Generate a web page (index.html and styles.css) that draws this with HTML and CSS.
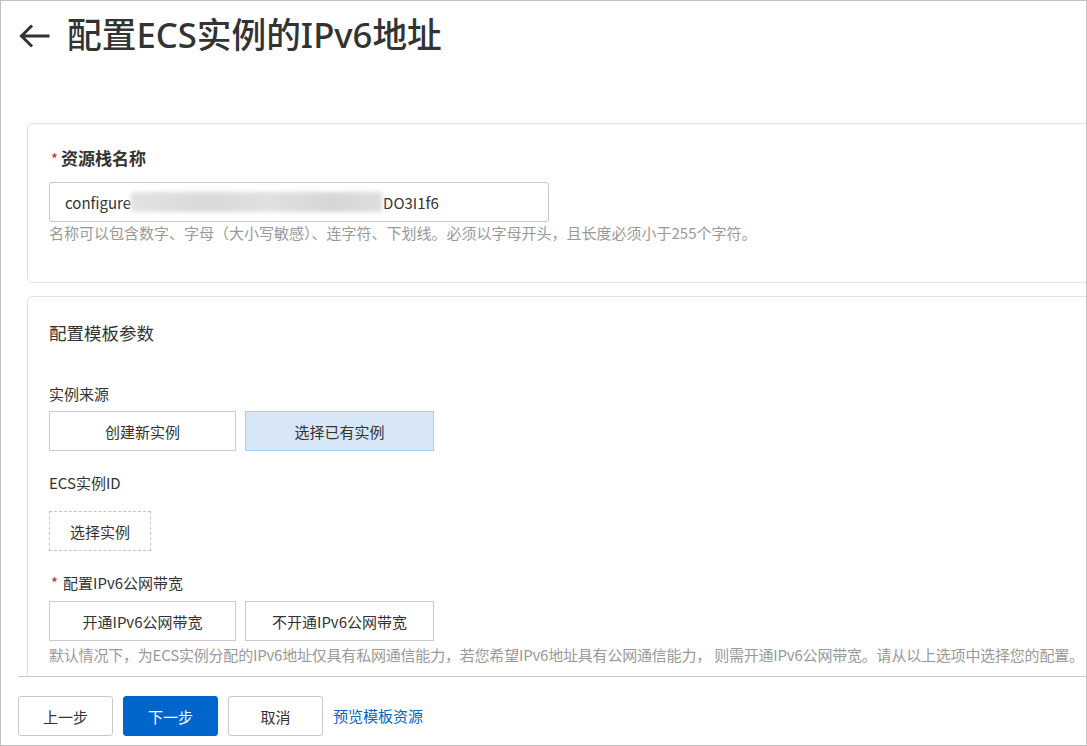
FILE: index.html
```html
<!DOCTYPE html>
<html lang="zh-CN">
<head>
<meta charset="utf-8">
<title>配置ECS实例的IPv6地址</title>
<link rel="stylesheet" href="styles.css">
</head>
<body>
<div class="frame">
  <header class="page-header">
    <svg class="back" width="32" height="24" viewBox="0 0 32 24" aria-hidden="true">
      <path d="M30 12H4M13 2.5L3.5 12L13 21.5" fill="none" stroke="#333" stroke-width="3" stroke-linecap="square" stroke-linejoin="miter"/>
    </svg>
    <h1 class="title">配置ECS实例的IPv6地址</h1>
  </header>
  <main class="body">
    <section class="card card-name">
      <div class="label label-strong"><span class="req">*</span>资源栈名称</div>
      <div class="input"><span>configure</span><span class="blurred" aria-hidden="true"></span><span>DO3I1f6</span></div>
      <div class="help">名称可以包含数字、字母（大小写敏感）、连字符、下划线。必须以字母开头，且长度必须小于255个字符。</div>
    </section>
    <section class="card card-params">
      <h2 class="section-title">配置模板参数</h2>
      <div class="label label-source">实例来源</div>
      <div class="choices">
        <div class="choice">创建新实例</div>
        <div class="choice selected">选择已有实例</div>
      </div>
      <div class="label label-ecs">ECS实例ID</div>
      <div class="dashed-btn">选择实例</div>
      <div class="label label-bw"><span class="req">*</span>配置IPv6公网带宽</div>
      <div class="choices choices-bw">
        <div class="choice">开通IPv6公网带宽</div>
        <div class="choice">不开通IPv6公网带宽</div>
      </div>
      <div class="help help-bw"><span>默认情况下，为ECS实例分配的IPv6地址仅具有私网通信能力，若您希望IPv6地址具有公网通信能力， 则需开通IPv6公网带宽。请从以上选项中选择您的配置。</span></div>
    </section>
  </main>
  <footer class="footer">
    <div class="btn">上一步</div>
    <div class="btn btn-primary">下一步</div>
    <div class="btn">取消</div>
    <a class="link" href="#">预览模板资源</a>
  </footer>
</div>
</body>
</html>
```
FILE: styles.css
```css
* { box-sizing: border-box; }
html, body { margin: 0; padding: 0; background: #fff; }
body {
  font-family: "Noto Sans CJK SC", "Noto Sans", sans-serif;
  color: #333;
  font-size: 15px;
}
.frame {
  width: 1087px;
  height: 746px;
  border: 1px solid #c2c2c2;
  display: flex;
  flex-direction: column;
  overflow: hidden;
}
.page-header {
  display: flex;
  align-items: center;
  height: 40px;
  margin-top: 14px;
  padding-left: 17px;
  flex: none;
}
.back { display: block; margin-top: 2px; }
.title {
  margin: 0 0 0 17px;
  font-family: "Noto Sans", "Noto Sans CJK SC", sans-serif;
  font-size: 34.7px;
  font-weight: 500;
  line-height: 40px;
  color: #333;
  letter-spacing: 0;
}
.body {
  flex: 1;
  overflow: hidden;
  padding: 68px 0 0 26px;
  min-height: 0;
}
.card {
  border: 1px solid #e3e3e3;
  border-radius: 5px;
  margin-right: -20px;
  padding-left: 21px;
  background: #fff;
}
.card-name {
  padding-top: 22px;
  padding-bottom: 38px;
}
.card-params {
  margin-top: 13px;
  padding-top: 23px;
  padding-bottom: 30px;
}
.label {
  font-size: 15px;
  line-height: 22px;
  color: #333;
}
.label-strong {
  font-size: 17px;
  font-weight: 700;
  line-height: 24px;
  color: #333;
}
.req {
  color: #e02020;
  font-weight: 400;
  font-size: 15px;
  margin-left: 2px;
  margin-right: 5px;
}
.label-strong .req { margin-right: 3px; }
.input {
  margin-top: 11px;
  width: 500px;
  height: 40px;
  border: 1px solid #c4c6cc;
  border-radius: 3px;
  padding-left: 15px;
  display: flex;
  align-items: center;
  font-size: 15px;
  color: #333;
  white-space: nowrap;
  overflow: hidden;
}
.blurred {
  display: inline-block;
  width: 251px;
  height: 20px;
  margin-right: 1px;
  background: linear-gradient(90deg, #e2e2e2 0%, #d9d9d9 30%, #e0e0e0 55%, #d6d6d6 80%, #dedede 100%);
  filter: blur(2px);
}
.help {
  font-size: 15px;
  line-height: 22px;
  color: #999;
  white-space: nowrap;
}
.help-bw { letter-spacing: -0.2px; }
.section-title {
  margin: 0;
  font-size: 17.5px;
  font-weight: 400;
  line-height: 26px;
  color: #333;
}
.label-source { margin-top: 37px; }
.choices {
  display: flex;
  gap: 9px;
  margin-top: 6px;
}
.choice {
  width: 187px;
  height: 40px;
  border: 1px solid #cacaca;
  display: flex;
  align-items: center;
  justify-content: center;
  font-size: 15px;
  color: #333;
  background: #fff;
}
.choice + .choice { width: 189px; }
.choice.selected {
  background: #d7e7f8;
  border-color: #a8cff0;
}
.label-ecs { margin-top: 21px; }
.dashed-btn {
  margin-top: 17px;
  width: 102px;
  height: 40px;
  border: 1px dashed #c4c4c4;
  display: flex;
  align-items: center;
  justify-content: center;
  font-size: 15px;
  color: #333;
}
.label-bw { margin-top: 21px; }
.choices-bw { margin-top: 7px; }
.help-bw { margin-top: 3px; }
.footer {
  flex: none;
  height: 69px;
  margin-left: 17px;
  border-top: 1px solid #c8c8c8;
  display: flex;
  align-items: flex-start;
  gap: 10px;
  padding-top: 19px;
}
.btn {
  width: 95px;
  height: 40px;
  border: 1px solid #c8c8c8;
  border-radius: 3px;
  display: flex;
  align-items: center;
  justify-content: center;
  font-size: 15px;
  color: #333;
  background: #fff;
}
.btn-primary {
  background: #0066cc;
  border-color: #0066cc;
  color: #fff;
}
.link {
  height: 40px;
  line-height: 40px;
  font-size: 15px;
  color: #0066cc;
  text-decoration: none;
}
```
